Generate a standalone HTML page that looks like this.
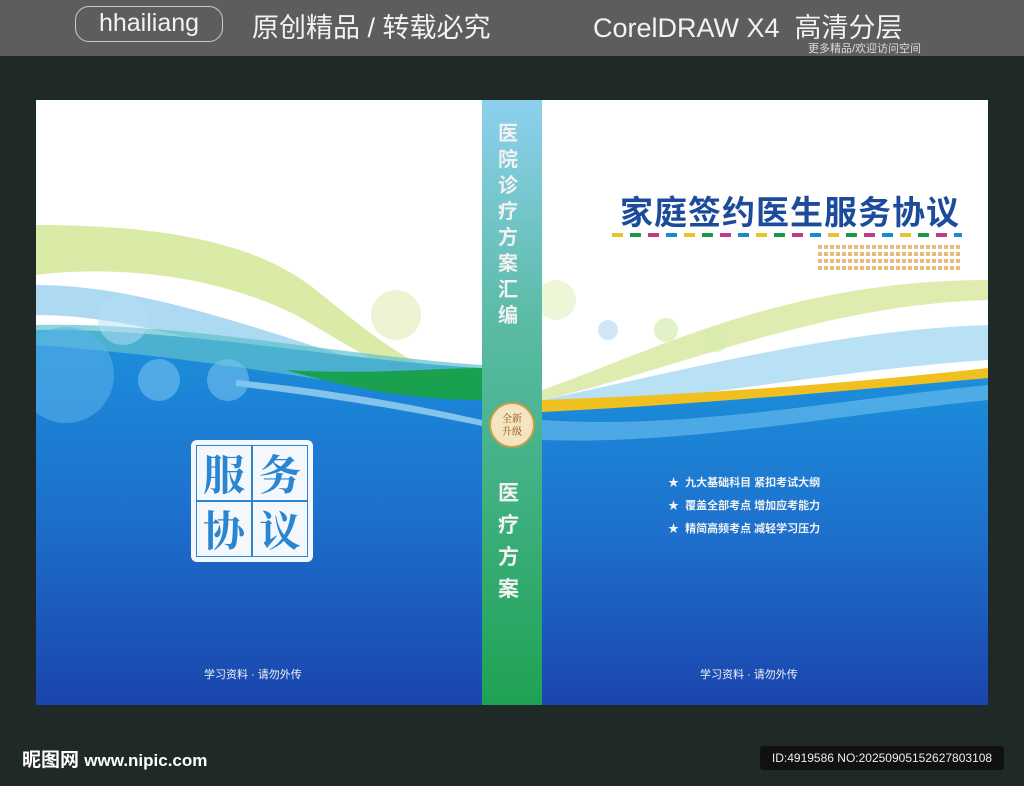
<!DOCTYPE html>
<html><head><meta charset="utf-8"><style>
body{margin:0;width:1024px;height:786px;overflow:hidden;background:#1f2927;font-family:"Liberation Sans","Noto Sans CJK SC",sans-serif;position:relative}
.top{position:absolute;left:0;top:0;width:1024px;height:56px;background:#5c5e5d}
.t{position:absolute;color:#f2f2f2;white-space:nowrap}
.c{position:absolute;width:54px;height:54px;background:#f4f8fc;color:#2a86d0;font-family:"Noto Serif CJK SC",serif;font-weight:bold;font-size:42px;line-height:54px;text-align:center}
</style></head><body>
<div class="top"></div>
<div class="t" style="left:75px;top:6px;width:146px;height:34px;border:1px solid #ccc;border-radius:14px;font-size:25px;text-align:center;line-height:32px">hhailiang</div>
<div class="t" style="left:252px;top:6px;font-size:27px">原创精品 / 转载必究</div>
<div class="t" style="left:593px;top:6px;font-size:27px">CorelDRAW X4 &nbsp;高清分层</div>
<div class="t" style="left:808px;top:40px;font-size:11px;color:#ddd">更多精品/欢迎访问空间</div>

<svg style="position:absolute;left:36px;top:100px" width="952" height="605" viewBox="0 0 952 605">
<defs>
<linearGradient id="bl" x1="0" y1="0" x2="0" y2="1"><stop offset="0" stop-color="#1c90dc"/><stop offset="0.5" stop-color="#1d6fcc"/><stop offset="1" stop-color="#1a45ad"/></linearGradient>
<linearGradient id="sp" x1="0" y1="0" x2="0" y2="1"><stop offset="0" stop-color="#8dd0ef"/><stop offset="0.35" stop-color="#5cbca8"/><stop offset="1" stop-color="#1fa254"/></linearGradient>
</defs>
<rect width="952" height="605" fill="#fff"/>
<!-- left waves -->
<path d="M0 125 C150 125 230 150 280 190 C330 230 380 275 446 285 L446 300 C380 290 320 250 260 215 C180 175 80 165 0 175Z" fill="#cde38a" opacity=".75"/>
<path d="M0 185 C120 185 250 240 446 300 L446 320 C250 270 120 215 0 215Z" fill="#9fd3f0" opacity=".85"/>
<path d="M0 230 C150 228 300 260 446 268 L446 605 L0 605Z" fill="url(#bl)"/>
<path d="M0 225 C150 222 300 255 446 265 L446 300 C320 290 200 260 0 245Z" fill="#5fc0cc" opacity=".7"/>
<path d="M250 270 C330 275 400 268 446 268 L446 300 C380 300 320 290 250 270Z" fill="#1aa14f"/>
<path d="M200 280 C300 290 380 305 446 320 L446 326 C380 312 300 298 200 286Z" fill="#9fd3f0" opacity=".8"/>
<circle cx="30" cy="275" r="48" fill="#5db2ea" opacity=".55"/>
<circle cx="87" cy="125" r="0" fill="none"/>
<circle cx="123" cy="280" r="21" fill="#7cc5f0" opacity=".55"/>
<circle cx="192" cy="280" r="21" fill="#7cc5f0" opacity=".55"/>
<circle cx="87" cy="220" r="25" fill="#b8def6" opacity=".5"/>
<circle cx="360" cy="215" r="25" fill="#e4f0c0" opacity=".7"/>
<!-- right waves -->
<path d="M506 290 C620 250 750 180 952 180 L952 200 C780 205 640 270 506 300Z" fill="#c9e07a" opacity=".6"/>
<path d="M506 300 C650 270 800 230 952 225 L952 260 C800 270 650 300 506 310Z" fill="#a8daf3" opacity=".8"/>
<path d="M506 310 C650 300 800 285 952 270 L952 605 L506 605Z" fill="url(#bl)"/>
<path d="M506 300 C650 295 800 285 952 268 L952 278 C800 292 650 305 506 312Z" fill="#f0c020"/>
<path d="M506 320 C650 330 800 300 952 285 L952 300 C800 315 650 345 506 340Z" fill="#6ec2ee" opacity=".6"/>
<circle cx="630" cy="230" r="12" fill="#d6ecb0" opacity=".7"/>
<circle cx="680" cy="240" r="12" fill="#d6ecb0" opacity=".7"/>
<circle cx="520" cy="200" r="20" fill="#eef6d8"/>
<circle cx="572" cy="230" r="10" fill="#cfe6f7"/>
<!-- spine -->
<rect x="446" y="0" width="60" height="605" fill="url(#sp)"/>
<circle cx="476" cy="325" r="22" fill="#f4e4c0" stroke="#c89a4c" stroke-width="2"/>
<text x="476" y="322" font-size="10" text-anchor="middle" fill="#8a4a10" font-family="Noto Serif CJK SC,serif">全新</text>
<text x="476" y="335" font-size="10" text-anchor="middle" fill="#8a4a10" font-family="Noto Serif CJK SC,serif">升级</text>
</svg>

<div class="t" style="left:498px;top:121px;width:26px;font-size:20px;font-weight:bold;line-height:26px;white-space:normal">医院诊疗方案汇编</div>
<div class="t" style="left:498px;top:478px;width:26px;font-size:21px;font-weight:bold;line-height:32px;white-space:normal">医疗方案</div>

<div class="t" style="left:620px;top:186px;font-size:33px;font-weight:bold;color:#1d4b9c;letter-spacing:1px">家庭签约医生服务协议</div>
<div style="position:absolute;left:612px;top:233px;width:350px;height:4px;background:repeating-linear-gradient(90deg,#e8c52a 0 11px,transparent 11px 18px,#1a9a45 18px 29px,transparent 29px 36px,#c03a8a 36px 47px,transparent 47px 54px,#1a8ad0 54px 65px,transparent 65px 72px)"></div>
<div style="position:absolute;left:818px;top:242px;width:142px;height:28px;background:repeating-linear-gradient(90deg,#e0a040 0 4px,transparent 4px 6px),#fff;opacity:.7;-webkit-mask:repeating-linear-gradient(0deg,#000 0 4px,transparent 4px 7px)"></div>

<div style="position:absolute;left:191px;top:440px;width:122px;height:122px;border-radius:6px;background:#f4f8fc"></div>
<div style="position:absolute;left:196px;top:445px;width:112px;height:112px;background:#2a86d0"></div>
<div class="c" style="left:197px;top:446px">服</div>
<div class="c" style="left:253px;top:446px">务</div>
<div class="c" style="left:197px;top:502px">协</div>
<div class="c" style="left:253px;top:502px">议</div>

<div class="t" style="left:668px;top:472px;font-size:11px;line-height:23px;font-weight:bold">★&nbsp; 九大基础科目 紧扣考试大纲<br>★&nbsp; 覆盖全部考点 增加应考能力<br>★&nbsp; 精简高频考点 减轻学习压力</div>
<div class="t" style="left:204px;top:666px;font-size:11px">学习资料 · 请勿外传</div>
<div class="t" style="left:700px;top:666px;font-size:11px">学习资料 · 请勿外传</div>

<div class="t" style="left:22px;top:745px;font-size:19px;font-weight:bold;color:#fff">昵图网 <span style="font-size:17px">www.nipic.com</span></div>
<div class="t" style="left:760px;top:746px;width:244px;height:24px;background:#111;border-radius:3px;font-size:12px;line-height:24px;text-align:center;color:#eee">ID:4919586 NO:20250905152627803108</div>
</body></html>
